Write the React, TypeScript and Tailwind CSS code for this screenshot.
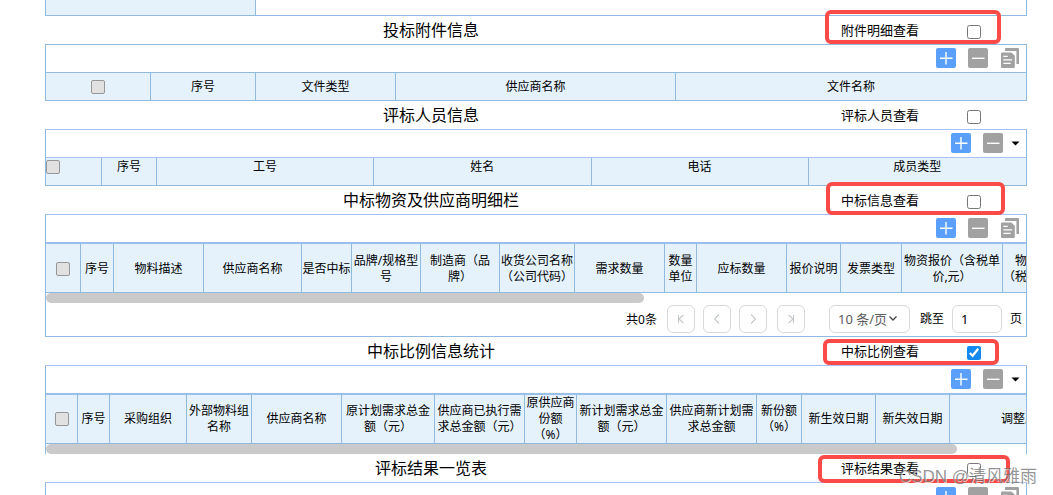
import type { ReactNode } from "react";

interface Column {
  label: string;
  width: string;
}

interface SectionTitleProps {
  id: string;
  title: string;
  toggle: string;
  checked?: boolean;
  mark?: string;
}

const attachmentColumns: Column[] = [
  { label: "序号", width: "w-[105px]" },
  { label: "文件类型", width: "w-[140px]" },
  { label: "供应商名称", width: "w-[280px]" },
  { label: "文件名称", width: "w-auto" },
];

const memberColumns: Column[] = [
  { label: "序号", width: "w-[55px]" },
  { label: "工号", width: "w-auto" },
  { label: "姓名", width: "w-auto" },
  { label: "电话", width: "w-auto" },
  { label: "成员类型", width: "w-auto" },
];

const supplierColumns: Column[] = [
  { label: "序号", width: "w-[33px]" },
  { label: "物料描述", width: "w-[90px]" },
  { label: "供应商名称", width: "w-[98px]" },
  { label: "是否中标", width: "w-[50px]" },
  { label: "品牌/规格型\n号", width: "w-[69px]" },
  { label: "制造商（品\n牌）", width: "w-[79px]" },
  { label: "收货公司名称\n（公司代码）", width: "w-[75px]" },
  { label: "需求数量", width: "w-[90px]" },
  { label: "数量\n单位", width: "w-[32px]" },
  { label: "应标数量", width: "w-[90px]" },
  { label: "报价说明", width: "w-[54px]" },
  { label: "发票类型", width: "w-[61px]" },
  { label: "物资报价（含税单\n价,元）", width: "w-[101px]" },
  { label: "　物\n（税", width: "w-[24px]" },
];

const ratioColumns: Column[] = [
  { label: "序号", width: "w-[32px]" },
  { label: "采购组织", width: "w-[77px]" },
  { label: "外部物料组\n名称", width: "w-[65px]" },
  { label: "供应商名称", width: "w-[90px]" },
  { label: "原计划需求总金\n额（元）", width: "w-[93px]" },
  { label: "供应商已执行需\n求总金额（元）", width: "w-[90px]" },
  { label: "原供应商\n份额\n（%）", width: "w-[52px]" },
  { label: "新计划需求总金\n额（元）", width: "w-[90px]" },
  { label: "供应商新计划需\n求总金额", width: "w-[90px]" },
  { label: "新份额\n（%）", width: "w-[45px]" },
  { label: "新生效日期", width: "w-[74px]" },
  { label: "新失效日期", width: "w-[74px]" },
  { label: "调整原因", width: "w-[150px]" },
];

function SectionTitle({ id, title, toggle, checked = false, mark }: SectionTitleProps) {
  return (
    <div className="relative grid h-7 grid-cols-[1fr_150px_60px] items-center">
      <h2 className="text-center text-[16px] leading-6">{title}</h2>
      <label htmlFor={id} className="pl-6 text-[13px] leading-5">
        {toggle}
      </label>
      <div className="pt-1">
        <input
          id={id}
          type="checkbox"
          defaultChecked={checked}
          className="block size-[14px] accent-[#148af0]"
        />
      </div>
      {mark && (
        <span
          className={`pointer-events-none absolute z-10 rounded-md border-4 border-[#fa4b48] ${mark}`}
        />
      )}
    </div>
  );
}

function Toolbar({ menu, className }: { menu: "copy" | "caret"; className: string }) {
  return (
    <div className={`flex items-center justify-end pr-1.5 pb-px ${className}`}>
      <button aria-label="新增" className="size-5 rounded-xs bg-[#5aa0fb]">
        <svg viewBox="0 0 20 20" className="size-5" stroke="#fff" strokeWidth="1.4">
          <path d="M10 4v12.5M4 10.3h12.5" />
        </svg>
      </button>
      <button aria-label="删除" className="ml-3 size-5 rounded-xs bg-[#a1a1a1]">
        <svg viewBox="0 0 20 20" className="size-5" stroke="#fff" strokeWidth="1.4">
          <path d="M4 10.3h12.5" />
        </svg>
      </button>
      {menu === "copy" ? (
        <button aria-label="复制" className="ml-3 size-5">
          <svg viewBox="0 0 20 20" className="size-5" fill="none">
            <path d="M5 1a1 1 0 0 1 1-1h12a1 1 0 0 1 1 1v15h-2.6V3H5z" fill="#a1a1a1" />
            <path d="M2 4.4h9.4l3.4 3.4V19a1 1 0 0 1-1 1H2a1 1 0 0 1-1-1V5.4a1 1 0 0 1 1-1z" fill="#a1a1a1" />
            <path d="M3.3 8.4h4.4M3.3 11.9h8.9M3.3 15.4h7.4" stroke="#fff" strokeWidth="1.3" />
          </svg>
        </button>
      ) : (
        <button aria-label="更多" className="ml-2 w-[9px]">
          <svg viewBox="0 0 9 5" className="block w-[9px]">
            <path d="M0.5 0.5h8l-4 4z" fill="#000" />
          </svg>
        </button>
      )}
    </div>
  );
}

function HeaderCheckbox({ className }: { className: string }) {
  return (
    <input
      type="checkbox"
      aria-label="全选"
      className={`block size-[14px] appearance-none rounded-xs border border-[#979797] bg-[#e1e1e1] ${className}`}
    />
  );
}

interface GridTableProps {
  columns: Column[];
  checkWidth: string;
  tableClass: string;
  cellClass: string;
  checkClass?: string;
}

function GridTable({ columns, checkWidth, tableClass, cellClass, checkClass = "mx-auto" }: GridTableProps) {
  return (
    <table className={`table-fixed border-separate border-spacing-0 bg-[#e5f2fc] text-[12px] leading-4 ${tableClass}`}>
      <thead>
        <tr>
          <th className={`border-r border-[#90badf] p-0 ${checkWidth} ${cellClass}`}>
            <HeaderCheckbox className={checkClass} />
          </th>
          {columns.map((col) => (
            <th
              key={col.label}
              className={`border-r border-[#90badf] p-0 text-center font-normal whitespace-pre last:border-r-0 ${col.width} ${cellClass}`}
            >
              {col.label}
            </th>
          ))}
        </tr>
      </thead>
    </table>
  );
}

function PageButton({ label, className = "", children }: { label: string; className?: string; children: ReactNode }) {
  return (
    <button
      aria-label={label}
      className={`flex size-7 items-center justify-center rounded-md border border-[#d9d9d9] ${className}`}
    >
      <svg viewBox="0 0 12 12" className="size-3" fill="none" stroke="#c3c8cc" strokeWidth="1.1">
        {children}
      </svg>
    </button>
  );
}

function Pager() {
  return (
    <div className="flex h-[33px] items-center justify-end gap-2 pr-1 pb-px text-[12px] leading-4">
      <span className="mr-0.5 pt-0.5">共0条</span>
      <PageButton label="首页">
        <path d="M3.5 2v8M8.5 2L4 6l4.5 4" />
      </PageButton>
      <PageButton label="上一页">
        <path d="M8 1.5L3.5 6 8 10.5" />
      </PageButton>
      <PageButton label="下一页">
        <path d="M4 1.5L8.5 6 4 10.5" />
      </PageButton>
      <PageButton label="末页" className="ml-0.5">
        <path d="M8.5 2v8M3.5 2L8 6l-4.5 4" />
      </PageButton>
      <div className="relative mr-0.5 ml-4">
        <select
          aria-label="每页条数"
          className="block h-7 w-[81px] appearance-none rounded-md border border-[#d9d9d9] bg-white pl-2 text-[13px] text-[#5c5c5c]"
        >
          <option>10 条/页</option>
        </select>
        <svg
          viewBox="0 0 10 10"
          className="pointer-events-none absolute top-2 right-3 size-[10px]"
          fill="none"
          stroke="#444"
          strokeWidth="1.3"
        >
          <path d="M1.5 3.5L5 7l3.5-3.5" />
        </svg>
      </div>
      <label htmlFor="jump-page">跳至</label>
      <input
        id="jump-page"
        type="text"
        defaultValue="1"
        className="h-7 w-[50px] rounded-md border border-[#d9d9d9] pl-2 text-[13px]"
      />
      <span>页</span>
    </div>
  );
}

export default function App() {
  return (
    <main className="relative h-screen overflow-hidden bg-white pr-[26px] pl-[45px] font-['Noto_Sans','Noto_Sans_CJK_SC',sans-serif] text-black">
      {/* End of the previous form row */}
      <div className="flex h-4 border-x border-b border-[#90badf]">
        <div className="w-[210px] border-r border-[#90badf] bg-[#e5f2fc]" />
      </div>

      {/* Attachments */}
      <SectionTitle
        id="show-attachment"
        title="投标附件信息"
        toggle="附件明细查看"
        mark="-top-1.5 right-[26px] h-[34px] w-[176px]"
      />
      <section className="border border-[#90badf]">
        <Toolbar menu="copy" className="h-7 border-b border-[#90badf]" />
        <GridTable
          columns={attachmentColumns}
          checkWidth="w-[105px]"
          tableClass="w-full"
          cellClass="h-[27px]"
        />
      </section>

      {/* Evaluation members */}
      <SectionTitle id="show-member" title="评标人员信息" toggle="评标人员查看" />
      <section className="border border-t-[#a4c2f4] border-r-[#90badf] border-b-[#90badf] border-l-[#90badf]">
        <Toolbar menu="caret" className="h-7 border-b border-[#a4c2f4]" />
        <GridTable
          columns={memberColumns}
          checkWidth="w-[56px]"
          tableClass="w-full"
          cellClass="h-[27px] pt-px align-top"
          checkClass="mt-px"
        />
      </section>

      {/* Winning materials and suppliers */}
      <SectionTitle
        id="show-supplier"
        title="中标物资及供应商明细栏"
        toggle="中标信息查看"
        mark="-top-1 right-[22px] h-[33px] w-[179px]"
      />
      <section className="border border-t-[#a4c2f4] border-r-[#90badf] border-b-[#90badf] border-l-[#90badf]">
        <Toolbar menu="copy" className="h-[29px] border-b-2 border-[#9bbfea]" />
        <div className="overflow-hidden">
          <GridTable
            columns={supplierColumns}
            checkWidth="w-[35px]"
            tableClass="w-[981px] min-w-full"
            cellClass="h-[49px] border-b pt-px"
          />
          <div className="h-[10px] w-[61%] rounded-full bg-[#cacaca]" />
        </div>
        <Pager />
      </section>

      {/* Winning ratio */}
      <SectionTitle
        id="show-ratio"
        title="中标比例信息统计"
        toggle="中标比例查看"
        checked
        mark="top-0.5 right-7 h-[26px] w-[176px]"
      />
      <section className="border-x border-t border-t-[#a4c2f4] border-r-[#90badf] border-l-[#90badf]">
        <Toolbar menu="caret" className="h-[29px] border-b-2 border-[#9bbfea]" />
        <div className="overflow-hidden">
          <GridTable
            columns={ratioColumns}
            checkWidth="w-[32px]"
            tableClass="w-[1054px] min-w-full"
            cellClass="h-[49px] border-b"
          />
          <div className="h-[10px] w-[93%] rounded-full bg-[#cacaca]" />
        </div>
      </section>

      {/* Evaluation results */}
      <SectionTitle
        id="show-result"
        title="评标结果一览表"
        toggle="评标结果查看"
        mark="top-px right-[17px] h-7 w-[192px]"
      />
      <section className="border border-t-[#a4c2f4] border-r-[#90badf] border-b-[#90badf] border-l-[#90badf]">
        <Toolbar menu="copy" className="h-7" />
      </section>

      <p className="pointer-events-none absolute right-4 bottom-1.5 z-20 font-['Liberation_Sans','Noto_Sans_CJK_SC',sans-serif] text-[17px] leading-6 text-[#666]/70 [text-shadow:1px_1px_0_rgba(255,255,255,0.7)]">
        CSDN @清风雅雨
      </p>
    </main>
  );
}
